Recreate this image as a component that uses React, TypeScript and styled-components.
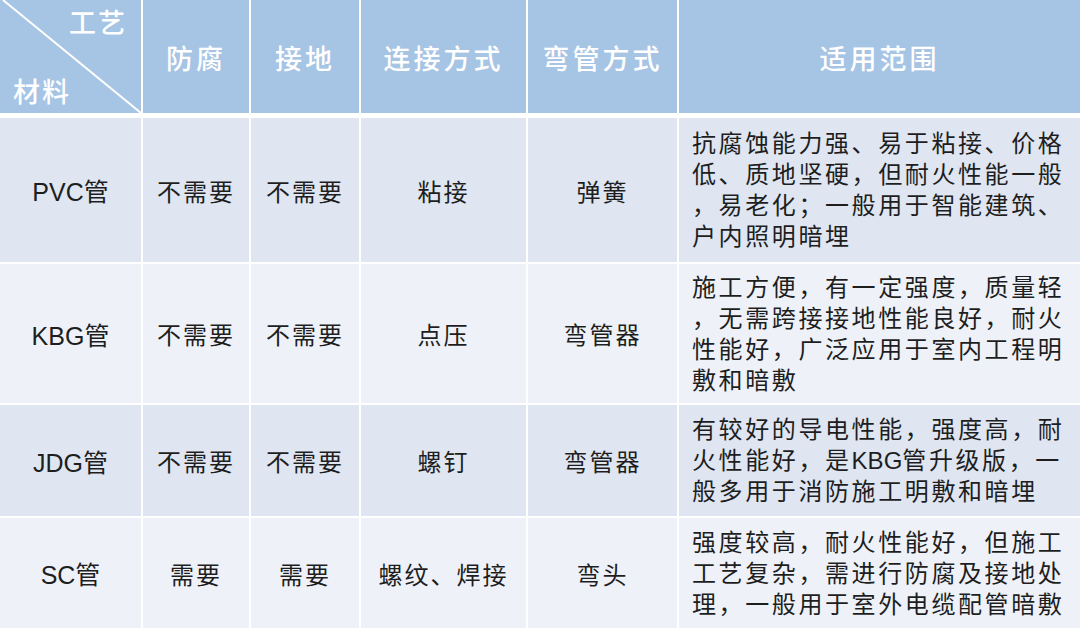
import * as React from 'react'
import styled, { createGlobalStyle } from 'styled-components'

const GlobalStyle = createGlobalStyle`
  html, body {
    margin: 0;
    padding: 0;
    background: #ffffff;
  }
  body {
    font-family: "Liberation Sans", "Noto Sans CJK SC", sans-serif;
  }
`

const COLUMNS = '141px 106px 108px 165px 149px 401px'

interface RowData {
  material: string
  antiCorrosion: string
  grounding: string
  connection: string
  bending: string
  scope: React.ReactNode[]
  height: number
}

const Latin = styled.span`
  letter-spacing: 0;
`

const rows: RowData[] = [
  {
    material: 'PVC管',
    antiCorrosion: '不需要',
    grounding: '不需要',
    connection: '粘接',
    bending: '弹簧',
    scope: [
      '抗腐蚀能力强、易于粘接、价格',
      '低、质地坚硬，但耐火性能一般',
      '，易老化；一般用于智能建筑、',
      '户内照明暗埋'
    ],
    height: 144
  },
  {
    material: 'KBG管',
    antiCorrosion: '不需要',
    grounding: '不需要',
    connection: '点压',
    bending: '弯管器',
    scope: [
      '施工方便，有一定强度，质量轻',
      '，无需跨接接地性能良好，耐火',
      '性能好，广泛应用于室内工程明',
      '敷和暗敷'
    ],
    height: 139
  },
  {
    material: 'JDG管',
    antiCorrosion: '不需要',
    grounding: '不需要',
    connection: '螺钉',
    bending: '弯管器',
    scope: [
      '有较好的导电性能，强度高，耐',
      <>
        火性能好，是<Latin>KBG</Latin>管升级版，一
      </>,
      '般多用于消防施工明敷和暗埋'
    ],
    height: 111
  },
  {
    material: 'SC管',
    antiCorrosion: '需要',
    grounding: '需要',
    connection: '螺纹、焊接',
    bending: '弯头',
    scope: [
      '强度较高，耐火性能好，但施工',
      '工艺复杂，需进行防腐及接地处',
      '理，一般用于室外电缆配管暗敷'
    ],
    height: 110
  }
]

const headers = ['防腐', '接地', '连接方式', '弯管方式', '适用范围']

const Page = styled.div`
  width: 1080px;
  height: 628px;
  overflow: hidden;
  background: #ffffff;
`

const HeaderRow = styled.div`
  display: grid;
  grid-template-columns: ${COLUMNS};
  grid-template-rows: 113px;
  column-gap: 2px;
  margin-bottom: 5px;
`

const HeaderCell = styled.div`
  background: #a6c4e4;
  color: #ffffff;
  font-family: "Noto Sans CJK SC", sans-serif;
  font-size: 27px;
  font-weight: 500;
  letter-spacing: 3px;
  display: flex;
  align-items: center;
  justify-content: center;
  padding-top: 2px;
  box-sizing: border-box;
`

const CornerCell = styled.div`
  position: relative;
  background: #a6c4e4;
  color: #ffffff;
  font-family: "Noto Sans CJK SC", sans-serif;
  font-size: 27px;
  font-weight: 500;
  letter-spacing: 2px;
  display: flex;
  flex-direction: column;
  justify-content: space-between;
  padding: 4px 14px 4px 13px;
  box-sizing: border-box;
  line-height: 36px;
`

const CornerTop = styled.span`
  align-self: flex-end;
`

const CornerBottom = styled.span`
  align-self: flex-start;
`

const Diagonal = styled.svg`
  position: absolute;
  inset: 0;
  width: 100%;
  height: 100%;
`

const Body = styled.div<{ $rows: string }>`
  display: grid;
  grid-template-columns: ${COLUMNS};
  grid-template-rows: ${(p) => p.$rows};
  gap: 2px;
`

const Cell = styled.div<{ $odd: boolean }>`
  background: ${(p) => (p.$odd ? '#dfe6f2' : '#eef2f8')};
  color: #1e1e1e;
  font-family: "Noto Sans CJK SC", sans-serif;
  font-size: 24px;
  letter-spacing: 2px;
  display: flex;
  align-items: center;
  justify-content: center;
  white-space: nowrap;
`

const MaterialCell = styled(Cell)`
  font-family: "Liberation Sans", "Noto Sans CJK SC", sans-serif;
  font-size: 25px;
  letter-spacing: 0;
`

const ScopeCell = styled(Cell)`
  justify-content: flex-start;
  padding-left: 13px;
  letter-spacing: 2.6px;
  line-height: 31px;
`

const ScopeText = styled.div`
  display: flex;
  flex-direction: column;
`

const ScopeLine = styled.span`
  font-family: "Liberation Sans", "Noto Sans CJK SC", sans-serif;
`

export default function App() {
  return (
    <>
      <GlobalStyle />
      <Page>
        <HeaderRow>
          <CornerCell>
            <Diagonal viewBox="0 0 141 113" preserveAspectRatio="none">
              <line x1="3" y1="0" x2="141" y2="113" stroke="#ffffff" strokeWidth="2" />
            </Diagonal>
            <CornerTop>工艺</CornerTop>
            <CornerBottom>材料</CornerBottom>
          </CornerCell>
          {headers.map((h) => (
            <HeaderCell key={h}>{h}</HeaderCell>
          ))}
        </HeaderRow>
        <Body $rows={rows.map((r) => `${r.height}px`).join(' ')}>
          {rows.map((r, i) => {
            const odd = i % 2 === 0
            return (
              <React.Fragment key={r.material}>
                <MaterialCell $odd={odd}>{r.material}</MaterialCell>
                <Cell $odd={odd}>{r.antiCorrosion}</Cell>
                <Cell $odd={odd}>{r.grounding}</Cell>
                <Cell $odd={odd}>{r.connection}</Cell>
                <Cell $odd={odd}>{r.bending}</Cell>
                <ScopeCell $odd={odd}>
                  <ScopeText>
                    {r.scope.map((line, j) => (
                      <ScopeLine key={j}>{line}</ScopeLine>
                    ))}
                  </ScopeText>
                </ScopeCell>
              </React.Fragment>
            )
          })}
        </Body>
      </Page>
    </>
  )
}
